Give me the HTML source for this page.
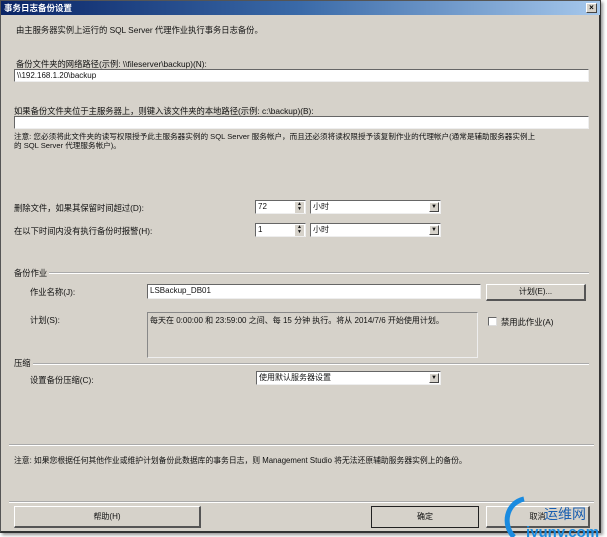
<!DOCTYPE html>
<html><head><meta charset="utf-8"><style>
*{margin:0;padding:0;box-sizing:border-box}
body{width:607px;height:537px;background:#fff;font-family:"Liberation Sans","Noto Sans CJK SC",sans-serif;font-size:8.3px;color:#111;position:relative;overflow:hidden}
#dlg{position:absolute;left:0;top:0;width:601px;height:533px;background:#d6d2ca;border:1px solid #555;border-right:2px solid #333;border-bottom:2px solid #333;box-shadow:2px 2px 3px #999}
#title{position:absolute;left:0;top:0;width:599px;height:14px;background:linear-gradient(90deg,#0a2466 0%,#3a6aa8 50%,#a6c8ec 100%);color:#fff;font-weight:bold;font-size:8.5px;line-height:14px;padding-left:3px}
#x{position:absolute;right:3px;top:2px;width:11px;height:10px;background:#d6d2ca;border:1px solid #fff;border-right-color:#444;border-bottom-color:#444;font-size:8px;line-height:8px;text-align:center;color:#000;font-weight:bold}
.a{position:absolute;white-space:nowrap}
.tb{position:absolute;background:#fff;border:1px solid #888;border-top-color:#666;border-left-color:#666;border-right-color:#eee;border-bottom-color:#eee;padding-left:2px;line-height:11px;font-size:8px}
.ta{position:absolute;background:#d6d2ca;border:1px solid #888;border-right-color:#eee;border-bottom-color:#eee;padding:2px;font-size:8px}
.btn{position:absolute;background:#d6d2ca;border:1px solid #fff;border-right:2px solid #555;border-bottom:2px solid #555;text-align:center;font-size:8px}
.dd{position:absolute;right:1px;top:1px;width:10px;height:10px;background:#d6d2ca;border:1px solid #fff;border-right-color:#444;border-bottom-color:#444;font-size:6px;line-height:8px;text-align:center}
.sp{position:absolute;right:1px;top:1px;width:9px;height:11px;background:#d6d2ca;font-size:5px;line-height:5px;text-align:center}
.hr{position:absolute;height:2px;border-top:1px solid #aaa;border-bottom:1px solid #fff}
</style></head><body>
<div id="dlg">
<div id="title">事务日志备份设置<div id="x">×</div></div>
<div class="a" style="left:15px;top:23px">由主服务器实例上运行的 SQL Server 代理作业执行事务日志备份。</div>
<div class="a" style="left:15px;top:57px">备份文件夹的网络路径(示例: \\fileserver\backup)(N):</div>
<div class="tb" style="left:13px;top:68px;width:575px;height:13px">\\192.168.1.20\backup</div>
<div class="a" style="left:13px;top:104px">如果备份文件夹位于主服务器上，则键入该文件夹的本地路径(示例: c:\backup)(B):</div>
<div class="tb" style="left:13px;top:115px;width:575px;height:13px"></div>
<div class="a" style="left:13px;top:131px;line-height:9px;font-size:7.6px">注意: 您必须将此文件夹的读写权限授予此主服务器实例的 SQL Server 服务帐户，而且还必须将读权限授予该复制作业的代理帐户(通常是辅助服务器实例上<br>的 SQL Server 代理服务帐户)。</div>
<div class="a" style="left:13px;top:201px">删除文件，如果其保留时间超过(D):</div>
<div class="tb" style="left:254px;top:199px;width:51px;height:14px">72<div class="sp">▲<br>▼</div></div>
<div class="tb" style="left:309px;top:199px;width:131px;height:14px">小时<div class="dd">▼</div></div>
<div class="a" style="left:13px;top:224px">在以下时间内没有执行备份时报警(H):</div>
<div class="tb" style="left:254px;top:222px;width:51px;height:14px">1<div class="sp">▲<br>▼</div></div>
<div class="tb" style="left:309px;top:222px;width:131px;height:14px">小时<div class="dd">▼</div></div>
<div class="a" style="left:13px;top:266px">备份作业</div>
<div class="hr" style="left:48px;top:271px;width:540px"></div>
<div class="a" style="left:29px;top:285px">作业名称(J):</div>
<div class="tb" style="left:146px;top:283px;width:334px;height:15px">LSBackup_DB01</div>
<div class="btn" style="left:485px;top:283px;width:100px;height:17px;line-height:14px">计划(E)...</div>
<div class="a" style="left:29px;top:313px">计划(S):</div>
<div class="ta" style="left:146px;top:311px;width:331px;height:46px">每天在 0:00:00 和 23:59:00 之间、每 15 分钟 执行。将从 2014/7/6 开始使用计划。</div>
<div style="position:absolute;left:487px;top:316px;width:9px;height:9px;background:#fff;border:1px solid #666;border-right-color:#ddd;border-bottom-color:#ddd"></div>
<div class="a" style="left:500px;top:315px">禁用此作业(A)</div>
<div class="a" style="left:13px;top:356px">压缩</div>
<div class="hr" style="left:32px;top:362px;width:556px"></div>
<div class="a" style="left:29px;top:373px">设置备份压缩(C):</div>
<div class="tb" style="left:255px;top:370px;width:185px;height:14px">使用默认服务器设置<div class="dd">▼</div></div>
<div class="hr" style="left:8px;top:443px;width:585px"></div>
<div class="a" style="left:13px;top:454px;font-size:7.8px">注意: 如果您根据任何其他作业或维护计划备份此数据库的事务日志，则 Management Studio 将无法还原辅助服务器实例上的备份。</div>
<div class="hr" style="left:8px;top:500px;width:585px"></div>
<div class="btn" style="left:13px;top:505px;width:187px;height:22px;line-height:19px">帮助(H)</div>
<div class="btn" style="left:370px;top:505px;width:108px;height:22px;line-height:19px;border:1px solid #222">确定</div>
<div class="btn" style="left:485px;top:505px;width:104px;height:22px;line-height:19px">取消</div>
</div>
<svg style="position:absolute;left:500px;top:495px" width="107" height="42">
<path d="M24 4 C6 8 2 30 14 42" fill="none" stroke="#1a8be0" stroke-width="5"/>
<text x="44" y="24" font-family="Liberation Sans,Noto Sans CJK SC,sans-serif" font-size="14" fill="#1a5fb0">运维网</text>
<text x="26" y="42" font-family="Liberation Sans,sans-serif" font-size="15" font-weight="bold" fill="#1a8be0">iyunv.com</text>
</svg>
</body></html>
